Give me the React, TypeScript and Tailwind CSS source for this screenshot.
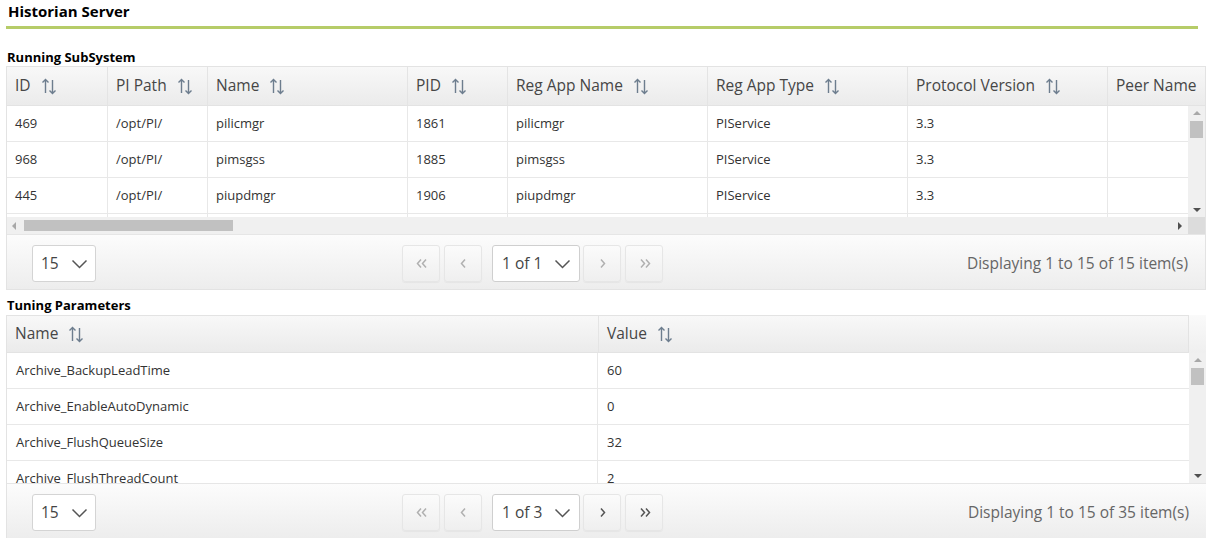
import React from 'react'

const font = { fontFamily: '"Open Sans", "Noto Sans", sans-serif' }

const SortIcon = () => (
  <svg width="16" height="19" viewBox="0 0 16 19" fill="none" stroke="#6d7d8e" strokeWidth="1.4" className="ml-[10px] shrink-0">
    <path d="M4.5 16V2.5M1.5 5.5l3-3 3 3" />
    <path d="M11.5 3v13.5M8.5 13.5l3 3 3-3" />
  </svg>
)

const Chevron = ({ color = '#555' }: { color?: string }) => (
  <svg width="17" height="10" viewBox="0 0 17 10" fill="none" stroke={color} strokeWidth="1.5">
    <path d="M1.5 1.5l7 7 7-7" />
  </svg>
)

const Arrow = ({ kind, enabled }: { kind: 'first' | 'prev' | 'next' | 'last'; enabled: boolean }) => {
  const c = enabled ? '#555' : '#b0b0b0'
  const d = {
    first: 'M6 1.5L2.5 5.5 6 9.5M11 1.5L7.5 5.5 11 9.5',
    prev: 'M8 1.5L4.5 5.5 8 9.5',
    next: 'M5 1.5l3.5 4-3.5 4',
    last: 'M3 1.5l3.5 4-3.5 4M8 1.5l3.5 4-3.5 4',
  }[kind]
  return (
    <svg width="13" height="11" viewBox="0 0 13 11" fill="none" stroke={c} strokeWidth="1.5">
      <path d={d} />
    </svg>
  )
}

const NavBtn = ({ kind, enabled }: { kind: 'first' | 'prev' | 'next' | 'last'; enabled: boolean }) => (
  <div className="w-[38px] h-[37px] rounded-[3px] border border-[#e6e6e6] bg-gradient-to-b from-[#fbfbfb] to-[#efefef] flex items-center justify-center shadow-[0_1px_1px_rgba(0,0,0,0.04)]">
    <Arrow kind={kind} enabled={enabled} />
  </div>
)

const Pager = ({ page, total, next }: { page: string; total: number; next: boolean }) => (
  <div className="h-[55px] pt-[3px] flex items-center bg-gradient-to-b from-[#fcfcfc] to-[#ededed] border-t border-[#e6e6e6]">
    <div className="ml-[25px] w-[64px] h-[37px] bg-white border border-[#d4d4d4] rounded-[3px] flex items-center pl-[8px] gap-[12px] text-[15.5px] text-[#444]">
      <span>15</span>
      <Chevron />
    </div>
    <div className="ml-[306px] flex items-center">
      <NavBtn kind="first" enabled={false} />
      <div className="ml-[4px]">
        <NavBtn kind="prev" enabled={false} />
      </div>
      <div className="ml-[10px] w-[88px] h-[37px] bg-white border border-[#cfcfcf] rounded-[3px] flex items-center pl-[9px] gap-[12px] text-[15.5px] text-[#444]">
        <span>{page}</span>
        <Chevron />
      </div>
      <div className="ml-[3px]">
        <NavBtn kind="next" enabled={next} />
      </div>
      <div className="ml-[4px]">
        <NavBtn kind="last" enabled={next} />
      </div>
    </div>
    <div className="ml-auto mr-[17px] text-[15.5px] text-[#666]">Displaying 1 to 15 of {total} item(s)</div>
  </div>
)

const VScroll = ({ height }: { height: number }) => (
  <div className="w-[17px] bg-[#f0f0f0] flex flex-col items-center shrink-0" style={{ height }}>
    <div className="mt-[5px] w-0 h-0 border-l-[4px] border-r-[4px] border-b-[4px] border-l-transparent border-r-transparent border-b-[#a8a8a8]" />
    <div className="mt-[6px] w-[13px] h-[17px] bg-[#c1c1c1]" />
    <div className="mt-auto mb-[5px] w-0 h-0 border-l-[4px] border-r-[4px] border-t-[4px] border-l-transparent border-r-transparent border-t-[#505050]" />
  </div>
)

const cols1 = [
  { h: 'ID', w: 100 },
  { h: 'PI Path', w: 100 },
  { h: 'Name', w: 200 },
  { h: 'PID', w: 100 },
  { h: 'Reg App Name', w: 200 },
  { h: 'Reg App Type', w: 200 },
  { h: 'Protocol Version', w: 200 },
  { h: 'Peer Name', w: 200 },
]

const rows1 = [
  ['469', '/opt/PI/', 'pilicmgr', '1861', 'pilicmgr', 'PIService', '3.3', ''],
  ['968', '/opt/PI/', 'pimsgss', '1885', 'pimsgss', 'PIService', '3.3', ''],
  ['445', '/opt/PI/', 'piupdmgr', '1906', 'piupdmgr', 'PIService', '3.3', ''],
  ['', '', '', '', '', '', '', ''],
]

const rows2 = [
  ['Archive_BackupLeadTime', '60'],
  ['Archive_EnableAutoDynamic', '0'],
  ['Archive_FlushQueueSize', '32'],
  ['Archive_FlushThreadCount', '2'],
]

const HeaderCell = ({ label, w, first }: { label: string; w: number; first?: boolean }) => (
  <div
    className={`h-full flex items-center pl-[8px] shrink-0 text-[15.5px] text-[#464646] ${first ? '' : 'border-l border-[#e4e4e4]'}`}
    style={{ width: w }}
  >
    <span className="whitespace-nowrap">{label}</span>
    <SortIcon />
  </div>
)

const RunningSubSystem = () => (
  <div className="ml-[6px] w-[1200px] border border-[#e3e3e3] overflow-hidden">
    <div className="h-[39px] flex bg-gradient-to-b from-[#f8f8f8] to-[#ebebeb] border-b border-[#e3e3e3] overflow-hidden">
      {cols1.map((c, i) => (
        <HeaderCell key={c.h} label={c.h} w={c.w} first={i === 0} />
      ))}
    </div>
    <div className="flex">
      <div className="w-[1182px] h-[111px] overflow-hidden bg-white">
        {rows1.map((r, ri) => (
          <div key={ri} className="h-[36px] flex border-b border-[#e8e8e8]">
            {r.map((v, ci) => (
              <div
                key={ci}
                className={`h-full flex items-center pl-[8px] shrink-0 text-[13px] text-[#333] ${ci === 0 ? '' : 'border-l border-[#e8e8e8]'}`}
                style={{ width: cols1[ci].w }}
              >
                {v}
              </div>
            ))}
          </div>
        ))}
      </div>
      <VScroll height={111} />
    </div>
    <div className="h-[17px] flex">
      <div className="w-[1182px] bg-[#f0f0f0] flex items-center">
        <div className="ml-[5px] w-0 h-0 border-t-[4px] border-b-[4px] border-r-[4px] border-t-transparent border-b-transparent border-r-[#a8a8a8]" />
        <div className="ml-[8px] w-[209px] h-[11px] bg-[#c1c1c1]" />
        <div className="ml-auto mr-[6px] w-0 h-0 border-t-[4px] border-b-[4px] border-l-[4px] border-t-transparent border-b-transparent border-l-[#505050]" />
      </div>
      <div className="w-[17px] bg-[#dcdcdc]" />
    </div>
    <Pager page="1 of 1" total={15} next={false} />
  </div>
)

const TuningParameters = () => (
  <div className="ml-[6px] w-[1200px] overflow-hidden">
    <div className="h-[38px] flex bg-gradient-to-b from-[#fafafa] to-[#efefef]">
      <div className="w-[1183px] h-full flex border border-[#e3e3e3] bg-gradient-to-b from-[#f8f8f8] to-[#ebebeb]">
        <HeaderCell label="Name" w={591} first />
        <HeaderCell label="Value" w={591} />
      </div>
    </div>
    <div className="flex border-l border-[#e3e3e3]">
      <div className="w-[1182px] h-[130px] overflow-hidden bg-white">
        {rows2.map((r, ri) => (
          <div key={ri} className="h-[36px] flex border-b border-[#e8e8e8]">
            {r.map((v, ci) => (
              <div
                key={ci}
                className={`h-full flex items-center pl-[9px] shrink-0 text-[13px] text-[#333] ${ci === 0 ? '' : 'border-l border-[#e8e8e8]'}`}
                style={{ width: ci === 0 ? 590 : 592 }}
              >
                {v}
              </div>
            ))}
          </div>
        ))}
      </div>
      <VScroll height={130} />
    </div>
    <div className="border-l border-[#e3e3e3]">
      <Pager page="1 of 3" total={35} next />
    </div>
  </div>
)

export default function App() {
  return (
    <div className="w-[1213px] h-[546px] bg-white overflow-hidden" style={font}>
      <div className="pl-[8px] pt-[1px] text-[15px] font-bold text-black leading-[20px]">Historian Server</div>
      <div className="ml-[6px] mt-[5px] w-[1192px] h-[3px] bg-[#b6cc68]" />
      <div className="pl-[7px] mt-[20px] text-[13px] font-bold text-black leading-[16px]">Running SubSystem</div>
      <div className="mt-[1px]">
        <RunningSubSystem />
      </div>
      <div className="pl-[7px] mt-[7px] mb-[2px] text-[13px] font-bold text-black leading-[16px]">Tuning Parameters</div>
      <TuningParameters />
    </div>
  )
}
